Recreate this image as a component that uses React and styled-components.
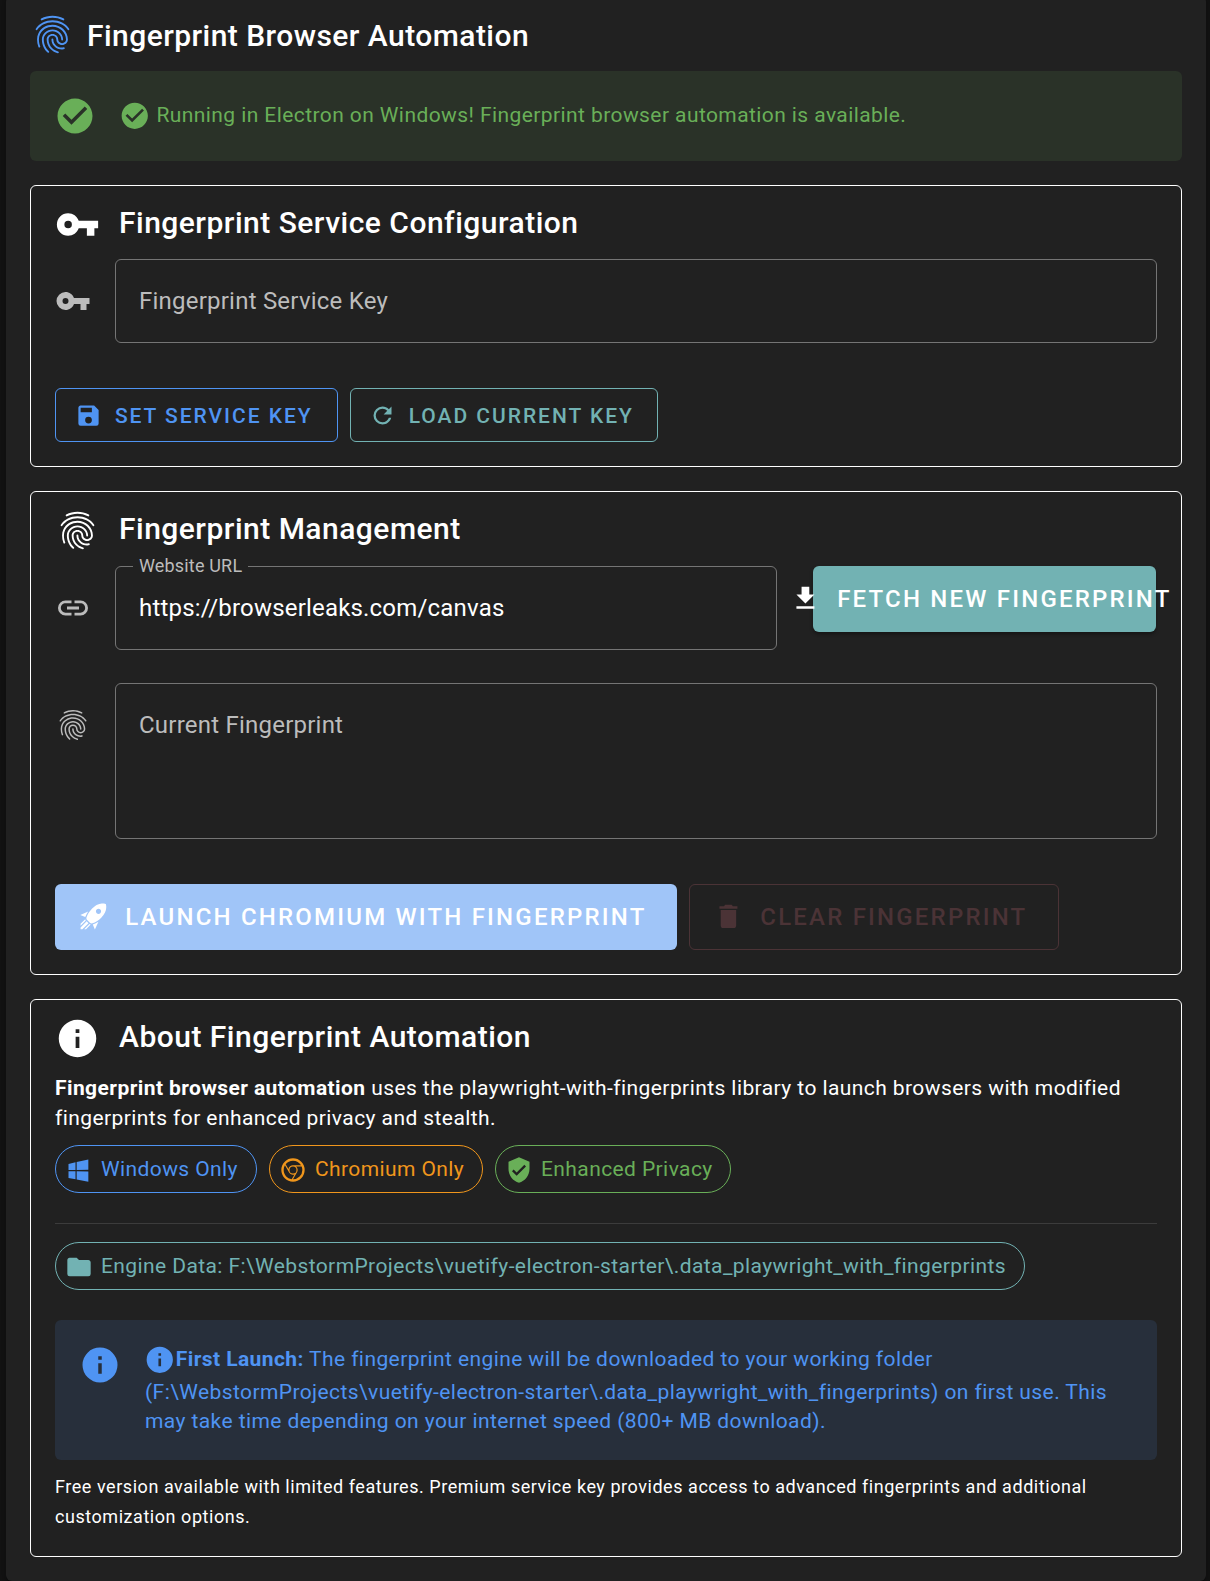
import React from "react";
import styled, { createGlobalStyle } from "styled-components";

const color = {
  surface: "#212121",
  primary: "#4f94f3",
  success: "#69af58",
  secondary: "#72b2b3",
  warning: "#f0961c",
};

const icons = {
  fingerprint:
    "M17.81,4.47C17.73,4.47 17.65,4.45 17.58,4.41C15.66,3.42 14,3 12,3C10.03,3 8.15,3.47 6.44,4.41C6.2,4.54 5.9,4.45 5.76,4.21C5.63,3.97 5.72,3.66 5.96,3.53C7.82,2.5 9.86,2 12,2C14.14,2 16,2.47 18.04,3.5C18.29,3.65 18.38,3.95 18.25,4.19C18.16,4.37 18,4.47 17.81,4.47M3.5,9.72C3.4,9.72 3.3,9.69 3.21,9.63C3,9.47 2.93,9.16 3.09,8.93C4.08,7.53 5.34,6.43 6.84,5.66C10,4.04 14,4.03 17.15,5.65C18.65,6.42 19.91,7.5 20.9,8.9C21.06,9.12 21,9.44 20.78,9.6C20.55,9.76 20.24,9.71 20.08,9.5C19.18,8.22 18.04,7.23 16.69,6.54C13.82,5.07 10.15,5.07 7.29,6.55C5.93,7.25 4.79,8.25 3.89,9.5C3.81,9.65 3.66,9.72 3.5,9.72M9.75,21.79C9.62,21.79 9.5,21.74 9.4,21.64C8.53,20.77 8.06,20.21 7.39,19C6.7,17.77 6.34,16.27 6.34,14.66C6.34,11.69 8.88,9.27 12,9.27C15.12,9.27 17.66,11.69 17.66,14.66A0.5,0.5 0 0,1 17.16,15.16A0.5,0.5 0 0,1 16.66,14.66C16.66,12.24 14.57,10.27 12,10.27C9.43,10.27 7.34,12.24 7.34,14.66C7.34,16.1 7.66,17.43 8.27,18.5C8.91,19.66 9.35,20.15 10.12,20.93C10.31,21.13 10.31,21.44 10.12,21.64C10,21.74 9.88,21.79 9.75,21.79M16.92,19.94C15.73,19.94 14.68,19.64 13.82,19.05C12.33,18.04 11.44,16.4 11.44,14.66A0.5,0.5 0 0,1 11.94,14.16A0.5,0.5 0 0,1 12.44,14.66C12.44,16.07 13.16,17.4 14.38,18.22C15.09,18.7 15.92,18.93 16.92,18.93C17.16,18.93 17.56,18.9 17.96,18.83C18.23,18.78 18.5,18.96 18.54,19.24C18.59,19.5 18.41,19.77 18.13,19.82C17.56,19.93 17.06,19.94 16.92,19.94M14.91,22C14.87,22 14.82,22 14.78,22C13.19,21.54 12.15,20.95 11.06,19.88C9.66,18.5 8.89,16.64 8.89,14.66C8.89,13.04 10.27,11.72 11.97,11.72C13.67,11.72 15.05,13.04 15.05,14.66C15.05,15.73 16,16.6 17.13,16.6C18.28,16.6 19.21,15.73 19.21,14.66C19.21,10.89 15.96,7.83 11.96,7.83C9.12,7.83 6.5,9.41 5.35,11.86C4.96,12.67 4.76,13.62 4.76,14.66C4.76,15.44 4.83,16.67 5.43,18.27C5.53,18.53 5.4,18.82 5.14,18.91C4.88,19 4.59,18.87 4.5,18.62C4,17.31 3.77,16 3.77,14.66C3.77,13.46 4,12.37 4.45,11.42C5.78,8.63 8.73,6.82 11.96,6.82C16.5,6.82 20.21,10.33 20.21,14.65C20.21,16.27 18.83,17.59 17.13,17.59C15.43,17.59 14.05,16.27 14.05,14.65C14.05,13.58 13.12,12.71 11.97,12.71C10.82,12.71 9.89,13.58 9.89,14.65C9.89,16.36 10.55,17.96 11.76,19.16C12.71,20.1 13.62,20.62 15.03,21C15.3,21.08 15.45,21.36 15.38,21.62C15.33,21.85 15.12,22 14.91,22Z",
  check:
    "M12 2C6.5 2 2 6.5 2 12S6.5 22 12 22 22 17.5 22 12 17.5 2 12 2M10 17L5 12L6.41 10.59L10 14.17L17.59 6.58L19 8L10 17Z",
  key: "M7,14A2,2 0 0,1 5,12A2,2 0 0,1 7,10A2,2 0 0,1 9,12A2,2 0 0,1 7,14M12.65,10C11.83,7.67 9.61,6 7,6A6,6 0 0,0 1,12A6,6 0 0,0 7,18C9.61,18 11.83,16.33 12.65,14H17V18H21V14H23V10H12.65Z",
  save: "M15,9H5V5H15M12,19A3,3 0 0,1 9,16A3,3 0 0,1 12,13A3,3 0 0,1 15,16A3,3 0 0,1 12,19M17,3H5C3.89,3 3,3.9 3,5V19A2,2 0 0,0 5,21H19A2,2 0 0,0 21,19V7L17,3Z",
  refresh:
    "M17.65,6.35C16.2,4.9 14.21,4 12,4A8,8 0 0,0 4,12A8,8 0 0,0 12,20C15.73,20 18.84,17.45 19.73,14H17.65C16.83,16.33 14.61,18 12,18A6,6 0 0,1 6,12A6,6 0 0,1 12,6C13.66,6 15.14,6.69 16.22,7.78L13,11H20V4L17.65,6.35Z",
  link: "M3.9,12C3.9,10.29 5.29,8.9 7,8.9H11V7H7A5,5 0 0,0 2,12A5,5 0 0,0 7,17H11V15.1H7C5.29,15.1 3.9,13.71 3.9,12M8,13H16V11H8V13M17,7H13V8.9H17C18.71,8.9 20.1,10.29 20.1,12C20.1,13.71 18.71,15.1 17,15.1H13V17H17A5,5 0 0,0 22,12A5,5 0 0,0 17,7Z",
  download: "M5,20H19V18H5M19,9H15V3H9V9H5L12,16L19,9Z",
  rocket:
    "M13.13 22.19L11.5 18.36C13.07 17.78 14.54 17 15.9 16.09L13.13 22.19M5.64 12.5L1.81 10.87L7.91 8.1C7 9.46 6.22 10.93 5.64 12.5M21.61 2.39C21.61 2.39 16.66 .269 11 5.93C8.81 8.12 7.5 10.53 6.65 12.64C6.37 13.39 6.56 14.21 7.11 14.77L9.24 16.89C9.79 17.45 10.61 17.63 11.36 17.35C13.5 16.53 15.88 15.19 18.07 13C23.73 7.34 21.61 2.39 21.61 2.39M14.54 9.46C13.76 8.68 13.76 7.41 14.54 6.63S16.59 5.85 17.37 6.63C18.14 7.41 18.15 8.68 17.37 9.46C16.59 10.24 15.32 10.24 14.54 9.46M6.24 22L9.88 18.36C9.54 18.27 9.21 18.12 8.91 17.91L4.83 22H6.24M2 22H3.41L8.18 17.24L6.76 15.83L2 20.59V22M2 19.17L6.09 15.09C5.88 14.79 5.73 14.47 5.64 14.12L2 17.76V19.17Z",
  trash: "M19,4H15.5L14.5,3H9.5L8.5,4H5V6H19M6,19A2,2 0 0,0 8,21H16A2,2 0 0,0 18,19V7H6V19Z",
  info: "M13,9H11V7H13M13,17H11V11H13M12,2A10,10 0 0,0 2,12A10,10 0 0,0 12,22A10,10 0 0,0 22,12A10,10 0 0,0 12,2Z",
  windows:
    "M3,12V6.75L9,5.43V11.91L3,12M20,3V11.75L10,11.9V5.21L20,3M3,13L9,13.09V19.9L3,18.75V13M20,13.25V22L10,20.09V13.1L20,13.25Z",
  chrome:
    "M12,20L15.46,14H15.45C15.79,13.4 16,12.73 16,12C16,10.8 15.46,9.73 14.62,9H19.41C19.79,9.93 20,10.94 20,12A8,8 0 0,1 12,20M4,12C4,10.54 4.39,9.18 5.07,8L8.54,14H8.55C9.24,15.19 10.5,16 12,16C12.45,16 12.88,15.91 13.29,15.77L10.89,19.91C7,19.37 4,16.04 4,12M15,12A3,3 0 0,1 12,15A3,3 0 0,1 9,12A3,3 0 0,1 12,9A3,3 0 0,1 15,12M12,4C14.96,4 17.54,5.61 18.92,8H12C10.06,8 8.45,9.38 8.08,11.21L5.7,7.08C7.16,5.21 9.44,4 12,4M12,2A10,10 0 0,0 2,12A10,10 0 0,0 12,22A10,10 0 0,0 22,12A10,10 0 0,0 12,2Z",
  shield:
    "M10,17L6,13L7.41,11.59L10,14.17L16.59,7.58L18,9M12,1L3,5V11C3,16.55 6.84,21.74 12,23C17.16,21.74 21,16.55 21,11V5L12,1Z",
  folder:
    "M10,4H4C2.89,4 2,4.89 2,6V18A2,2 0 0,0 4,20H20A2,2 0 0,0 22,18V8C22,6.89 21.1,6 20,6H12L10,4Z",
};

const GlobalStyle = createGlobalStyle`
  *, *::before, *::after { box-sizing: border-box; }
  body {
    margin: 0;
    background: #121212;
    color: #fff;
    font-family: Roboto, "Liberation Sans", sans-serif;
    overflow: hidden;
  }
`;

const Svg = styled.svg`
  display: block;
  flex: none;
  width: ${(p) => p.$size}px;
  height: ${(p) => p.$size}px;
  fill: currentColor;
`;

const InlineSvg = styled(Svg)`
  display: inline-block;
  vertical-align: -9px;
  margin: 0 0.8px 0 -1.5px;
`;

const Icon = ({ name, size, inline }) => {
  const Tag = inline ? InlineSvg : Svg;
  return (
    <Tag viewBox="0 0 24 24" $size={size} aria-hidden="true">
      <path d={icons[name]} />
    </Tag>
  );
};

const Page = styled.div`
  height: 1581px;
  padding: 0 4px 0 6px;
  overflow: hidden;
`;

const Card = styled.main`
  display: flex;
  flex-direction: column;
  height: 1585px;
  margin-top: -4px;
  padding: 4px 24px 24px;
  border-radius: 6px;
  background: ${color.surface};
  box-shadow: 0 3px 2px -2px rgba(0, 0, 0, 0.2), 0 2px 2px rgba(0, 0, 0, 0.14),
    0 2px 5px rgba(0, 0, 0, 0.12);
`;

const Title = styled.h1`
  display: flex;
  gap: 12px;
  height: 71px;
  margin: 0;
  padding-top: 11.5px;
  font-size: 30px;
  font-weight: 500;
  line-height: 48px;
  letter-spacing: 0.45px;
  white-space: nowrap;

  > svg {
    color: ${color.primary};
  }
`;

const SectionTitle = styled.h2`
  display: flex;
  gap: 19px;
  height: ${(p) => p.$height}px;
  margin: 0;
  padding-top: 16px;
  font-size: 30px;
  font-weight: 500;
  line-height: 41px;
  letter-spacing: 0.485px;
  white-space: nowrap;
`;

const Section = styled.section`
  height: ${(p) => p.$height}px;
  margin-top: 24px;
  padding: 0 24px;
  border: 1px solid #fff;
  border-radius: 6px;
`;

const Alert = styled.div`
  display: flex;
  gap: 24px;
  height: ${(p) => p.$height}px;
  padding: 24px;
  border-radius: 6px;
  color: ${(p) => color[p.$tone]};
  background: ${(p) => color[p.$tone]}1f;
`;

const AlertText = styled.div`
  flex: 1;
  margin-top: ${(p) => p.$top}px;
  font-size: 21px;
  line-height: 29.5px;
  letter-spacing: 0.415px;

  &::first-line {
    line-height: 35.5px;
  }

  strong {
    font-weight: 700;
  }
`;

const Field = styled.div`
  display: flex;
  flex: ${(p) => (p.$width ? "none" : 1)};
  width: ${(p) => (p.$width ? p.$width + "px" : "auto")};
  gap: 24px;
  margin-bottom: 33px;

  > svg {
    margin-top: 23.5px;
    color: #bcbcbc;
  }
`;

const Outline = styled.div`
  position: relative;
  flex: 1;
  height: ${(p) => p.$height}px;
  padding: 0 23px;
  border: 1px solid #757575;
  border-radius: 6px;
  font-size: 24px;
  line-height: 82px;
  letter-spacing: ${(p) => (p.$filled ? 0.19 : 0.225)}px;
  white-space: nowrap;
  color: ${(p) => (p.$filled ? "#fff" : "#bcbcbc")};
`;

const FloatingLabel = styled.label`
  position: absolute;
  top: -15px;
  left: 17px;
  padding: 0 6px;
  background: ${color.surface};
  color: #bcbcbc;
  font-size: 18px;
  line-height: 27px;
  letter-spacing: 0.17px;
`;

const FieldRow = styled.div`
  display: flex;
  gap: 36px;
`;

const ButtonRow = styled.div`
  display: flex;
  gap: 12px;
  margin-top: 45px;
`;

const Button = styled.button`
  display: flex;
  align-items: center;
  justify-content: center;
  flex: none;
  width: ${(p) => p.$width}px;
  height: ${(p) => (p.$large ? 66 : 54)}px;
  padding: ${(p) => (p.$large ? 0 : "1px 0 0")};
  border: ${(p) => (p.$fill ? "none" : "1px solid currentColor")};
  border-radius: 6px;
  background: ${(p) => p.$fill || "transparent"};
  color: ${(p) => p.$color};
  font: 500 ${(p) => (p.$large ? 24 : 21)}px Roboto, "Liberation Sans", sans-serif;
  letter-spacing: ${(p) => (p.$large ? 2.2 : 1.97)}px;
  text-transform: uppercase;
  white-space: nowrap;
  box-shadow: ${(p) => (p.$raised ? "0 3px 3px -1px rgba(0,0,0,.2), 0 2px 4px rgba(0,0,0,.2)" : "none")};

  > svg {
    margin: ${(p) => (p.$large ? "-2px 16.2px 0 -7.33px" : "-1px 13px 0 -5.5px")};
  }
`;

const Paragraph = styled.p`
  margin: 0;
  font-size: ${(p) => (p.$small ? 18 : 21)}px;
  line-height: 30px;
  letter-spacing: ${(p) => (p.$small ? 0.547 : 0.42)}px;

  strong {
    font-weight: 700;
  }
`;

const ChipRow = styled.div`
  display: flex;
  gap: 12px;
  margin-top: ${(p) => p.$top}px;
`;

const Chip = styled.span`
  display: flex;
  align-items: center;
  gap: 8.5px;
  width: ${(p) => p.$width}px;
  height: 48px;
  padding-left: 8.5px;
  border: 1px solid currentColor;
  border-radius: 24px;
  color: ${(p) => color[p.$tone]};
  font-size: 21px;
  letter-spacing: 0.405px;
  white-space: nowrap;

  > svg {
    margin-top: 2px;
  }
`;

const ChipLabel = styled.span`
  line-height: 30px;
`;

const Divider = styled.hr`
  height: 1px;
  margin: 30px 0 0;
  border: 0;
  background: #3c3c3c;
`;

const AlertSlot = styled.div`
  margin: 30px 0 12px;
`;

export default function App() {
  return (
    <Page>
      <GlobalStyle />
      <Card>
        <Title>
          <Icon name="fingerprint" size={45} />
          Fingerprint Browser Automation
        </Title>

        <Alert $tone="success" $height={90}>
          <Icon name="check" size={42} />
          <AlertText $top={3}>
            <Icon name="check" size={31.5} inline /> Running in Electron on Windows! Fingerprint
            browser automation is available.
          </AlertText>
        </Alert>

        <Section $height={282}>
          <SectionTitle $height={73}>
            <Icon name="key" size={45} />
            Fingerprint Service Configuration
          </SectionTitle>
          <Field>
            <Icon name="key" size={36} />
            <Outline $height={84}>Fingerprint Service Key</Outline>
          </Field>
          <ButtonRow>
            <Button $width={283} $color={color.primary}>
              <Icon name="save" size={27} />
              Set Service Key
            </Button>
            <Button $width={308} $color={color.secondary}>
              <Icon name="refresh" size={27} />
              Load Current Key
            </Button>
          </ButtonRow>
        </Section>

        <Section $height={484}>
          <SectionTitle $height={74}>
            <Icon name="fingerprint" size={45} />
            Fingerprint Management
          </SectionTitle>
          <FieldRow>
            <Field $width={722}>
              <Icon name="link" size={36} />
              <Outline $height={84} $filled>
                <FloatingLabel>Website URL</FloatingLabel>
                https://browserleaks.com/canvas
              </Outline>
            </Field>
            <Button $large $raised $width={343} $fill={color.secondary} $color="#fff">
              <Icon name="download" size={30.86} />
              Fetch New Fingerprint
            </Button>
          </FieldRow>
          <Field>
            <Icon name="fingerprint" size={36} />
            <Outline $height={156}>Current Fingerprint</Outline>
          </Field>
          <ButtonRow>
            <Button $large $width={622} $fill="#a0c5f8" $color="#fff">
              <Icon name="rocket" size={30.86} />
              Launch Chromium with Fingerprint
            </Button>
            <Button $large $width={370} $color="#4b3336">
              <Icon name="trash" size={30.86} />
              Clear Fingerprint
            </Button>
          </ButtonRow>
        </Section>

        <Section $height={558}>
          <SectionTitle $height={73}>
            <Icon name="info" size={45} />
            About Fingerprint Automation
          </SectionTitle>
          <Paragraph>
            <strong>Fingerprint browser automation</strong> uses the playwright-with-fingerprints
            library to launch browsers with modified fingerprints for enhanced privacy and stealth.
          </Paragraph>
          <ChipRow $top={12}>
            <Chip $tone="primary" $width={202}>
              <Icon name="windows" size={28} />
              <ChipLabel>Windows Only</ChipLabel>
            </Chip>
            <Chip $tone="warning" $width={214}>
              <Icon name="chrome" size={28} />
              <ChipLabel>Chromium Only</ChipLabel>
            </Chip>
            <Chip $tone="success" $width={236}>
              <Icon name="shield" size={28} />
              <ChipLabel>Enhanced Privacy</ChipLabel>
            </Chip>
          </ChipRow>
          <Divider />
          <ChipRow $top={18}>
            <Chip $tone="secondary" $width={970}>
              <Icon name="folder" size={28} />
              <ChipLabel>
                {"Engine Data: F:\\WebstormProjects\\vuetify-electron-starter\\.data_playwright_with_fingerprints"}
              </ChipLabel>
            </Chip>
          </ChipRow>
          <AlertSlot>
            <Alert $tone="primary" $height={140}>
              <Icon name="info" size={42} />
              <AlertText $top={-2}>
                <Icon name="info" size={31.5} inline />
                <strong>First Launch:</strong>
                {" The fingerprint engine will be downloaded to your working folder (F:\\WebstormProjects\\vuetify-electron-starter\\.data_playwright_with_fingerprints) on first use. This may take time depending on your internet speed (800+ MB download)."}
              </AlertText>
            </Alert>
          </AlertSlot>
          <Paragraph $small>
            Free version available with limited features. Premium service key provides access to
            advanced fingerprints and additional customization options.
          </Paragraph>
        </Section>
      </Card>
    </Page>
  );
}
